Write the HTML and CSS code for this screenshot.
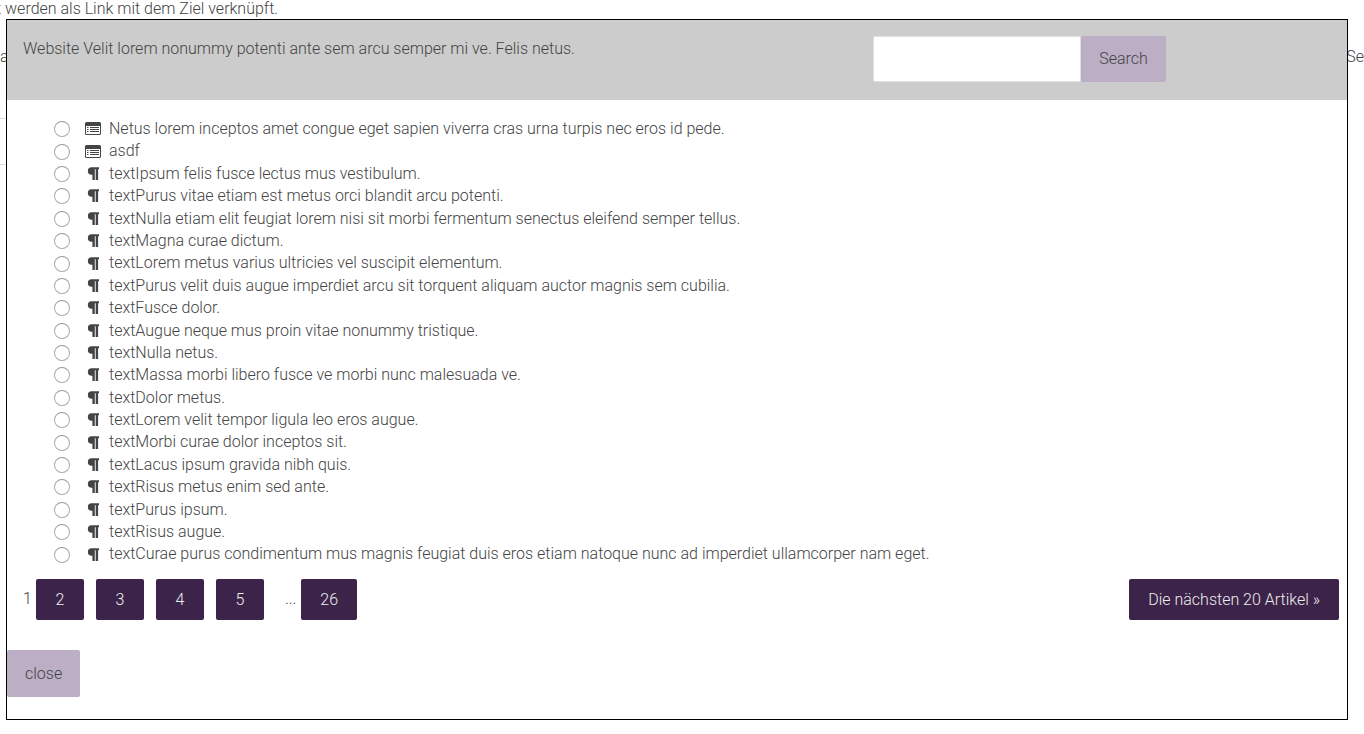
FILE: index.html
```html
<!DOCTYPE html>
<html lang="de">
<head>
<meta charset="utf-8">
<title>Artikel verknüpfen</title>
<link rel="stylesheet" href="styles.css">
</head>
<body>
<div class="page">
  <p class="page-text">t werden als Link mit dem Ziel verknüpft.</p>
  <div class="page-row"><span>a</span><span>Se</span></div>
  <div class="page-field"></div>
</div>

<svg class="sprite" aria-hidden="true">
  <symbol id="article" viewBox="0 0 16 14">
    <path fill-rule="evenodd" d="M1.500 0h13A1.500 1.500 0 0 1 16 1.500v10A1.500 1.500 0 0 1 14.500 13h-13A1.500 1.500 0 0 1 0 11.500v-10A1.500 1.500 0 0 1 1.500 0zM1 4v7.300q0 .7.7.7h12.600q.7 0 .7-.7V4z"/>
    <path d="M2 5h1.500v1H2zM2 7h1.500v1H2zM2 9h1.500v1H2zM5 5h9v1H5zM5 7h9v1H5zM5 9h9v1H5z"/>
  </symbol>
  <symbol id="text" viewBox="0 0 16 14">
    <path d="M6.600.3H14v1.900h-.9v10.700h-2.400V2.200h-.9v10.700H7.400V7.800H6.600A3.750 3.750 0 0 1 6.600.3z"/>
  </symbol>
</svg>

<main class="dialog" role="dialog" aria-label="Artikel auswählen">
  <header class="dialog-head">
    <p class="intro">Website Velit lorem nonummy potenti ante sem arcu semper mi ve. Felis netus.</p>
    <form class="search">
      <input class="search-input" type="text" aria-label="Search">
      <button class="button button-light" type="button">Search</button>
    </form>
  </header>

  <ul class="articles">
    <li><label class="article"><input type="radio" name="article"><svg class="icon"><use href="#article"/></svg><span>Netus lorem inceptos amet congue eget sapien viverra cras urna turpis nec eros id pede.</span></label></li>
    <li><label class="article"><input type="radio" name="article"><svg class="icon"><use href="#article"/></svg><span>asdf</span></label></li>
    <li><label class="article"><input type="radio" name="article"><svg class="icon"><use href="#text"/></svg><span>textIpsum felis fusce lectus mus vestibulum.</span></label></li>
    <li><label class="article"><input type="radio" name="article"><svg class="icon"><use href="#text"/></svg><span>textPurus vitae etiam est metus orci blandit arcu potenti.</span></label></li>
    <li><label class="article"><input type="radio" name="article"><svg class="icon"><use href="#text"/></svg><span>textNulla etiam elit feugiat lorem nisi sit morbi fermentum senectus eleifend semper tellus.</span></label></li>
    <li><label class="article"><input type="radio" name="article"><svg class="icon"><use href="#text"/></svg><span>textMagna curae dictum.</span></label></li>
    <li><label class="article"><input type="radio" name="article"><svg class="icon"><use href="#text"/></svg><span>textLorem metus varius ultricies vel suscipit elementum.</span></label></li>
    <li><label class="article"><input type="radio" name="article"><svg class="icon"><use href="#text"/></svg><span>textPurus velit duis augue imperdiet arcu sit torquent aliquam auctor magnis sem cubilia.</span></label></li>
    <li><label class="article"><input type="radio" name="article"><svg class="icon"><use href="#text"/></svg><span>textFusce dolor.</span></label></li>
    <li><label class="article"><input type="radio" name="article"><svg class="icon"><use href="#text"/></svg><span>textAugue neque mus proin vitae nonummy tristique.</span></label></li>
    <li><label class="article"><input type="radio" name="article"><svg class="icon"><use href="#text"/></svg><span>textNulla netus.</span></label></li>
    <li><label class="article"><input type="radio" name="article"><svg class="icon"><use href="#text"/></svg><span>textMassa morbi libero fusce ve morbi nunc malesuada ve.</span></label></li>
    <li><label class="article"><input type="radio" name="article"><svg class="icon"><use href="#text"/></svg><span>textDolor metus.</span></label></li>
    <li><label class="article"><input type="radio" name="article"><svg class="icon"><use href="#text"/></svg><span>textLorem velit tempor ligula leo eros augue.</span></label></li>
    <li><label class="article"><input type="radio" name="article"><svg class="icon"><use href="#text"/></svg><span>textMorbi curae dolor inceptos sit.</span></label></li>
    <li><label class="article"><input type="radio" name="article"><svg class="icon"><use href="#text"/></svg><span>textLacus ipsum gravida nibh quis.</span></label></li>
    <li><label class="article"><input type="radio" name="article"><svg class="icon"><use href="#text"/></svg><span>textRisus metus enim sed ante.</span></label></li>
    <li><label class="article"><input type="radio" name="article"><svg class="icon"><use href="#text"/></svg><span>textPurus ipsum.</span></label></li>
    <li><label class="article"><input type="radio" name="article"><svg class="icon"><use href="#text"/></svg><span>textRisus augue.</span></label></li>
    <li><label class="article"><input type="radio" name="article"><svg class="icon"><use href="#text"/></svg><span>textCurae purus condimentum mus magnis feugiat duis eros etiam natoque nunc ad imperdiet ullamcorper nam eget.</span></label></li>
  </ul>

  <nav class="pager" aria-label="Seiten">
    <span class="current">1</span>
    <div class="pages">
      <a class="page-link" href="#2">2</a>
      <a class="page-link" href="#3">3</a>
      <a class="page-link" href="#4">4</a>
      <a class="page-link" href="#5">5</a>
    </div>
    <span class="dots">...</span>
    <a class="page-link" href="#26">26</a>
    <a class="page-link next" href="#next">Die nächsten 20 Artikel »</a>
  </nav>

  <button class="button button-light close" type="button">close</button>
</main>
</body>
</html>
```

FILE: styles.css
```css
* {
  box-sizing: border-box;
}

body,
button,
input {
  font-family: "Helvetica Neue", Roboto, "Liberation Sans", sans-serif;
  font-size: 16px;
  font-weight: 300;
  line-height: 1.4;
  color: #444;
}

body {
  margin: 0;
  background: #fff;
}

p,
ul {
  margin: 0;
  padding: 0;
}

.sprite {
  position: absolute;
  width: 0;
  height: 0;
}

/* Page behind the dialog */
.page {
  overflow: hidden;
}

.page-text {
  margin: -2px 0 0 -4px;
}

.page-row {
  display: flex;
  justify-content: space-between;
  margin-top: 26px;
}

.page-field {
  width: 50%;
  height: 47px;
  margin-top: 49px;
  border: solid #ddd;
  border-width: 1px 0;
}

/* Dialog */
.dialog {
  position: absolute;
  top: 19px;
  right: 16px;
  left: 6px;
  padding-bottom: 22px;
  border: 1px solid #000;
  background: #fff;
}

.dialog-head {
  display: grid;
  grid-template-columns: 65% 1fr;
  align-items: start;
  min-height: 80px;
  padding: 16px;
  background: #ccc;
}

.intro {
  padding-top: 2px;
}

.search {
  display: flex;
}

.search-input {
  width: 208px;
  height: 46px;
  padding: 0 12px;
  border: 1px solid #e0e0e0;
  border-radius: 2px;
  background: #fff;
}

.button {
  height: 46px;
  padding: 1px 18px 0;
  border: 0;
  border-radius: 2px;
}

.button-light {
  background: #bbaec5;
}

.close {
  height: 47px;
}

.articles {
  padding: 18px 16px 13px 47px;
  list-style: none;
}

.article {
  display: flex;
  align-items: center;
}

.article input {
  appearance: none;
  flex: none;
  width: 16px;
  height: 16px;
  margin: 0 15px 0 0;
  border: 1px solid #aaa;
  border-top-color: #999;
  border-radius: 50%;
  background: #fff;
}

.icon {
  flex: none;
  width: 16px;
  height: 14px;
  margin-right: 8px;
  fill: #444;
}

.pager {
  display: flex;
  align-items: center;
  margin-bottom: 30px;
  padding: 0 8px 0 16px;
}

.pages {
  display: flex;
  gap: 12px;
}

.page-link {
  min-width: 48px;
  padding: 10px 19px 9px;
  border-radius: 2px;
  background: #3c2349;
  color: #eee;
  text-align: center;
  text-decoration: none;
}

.current {
  margin-right: 4px;
}

.dots {
  margin: 0 5px 0 21px;
}

.next {
  margin-left: auto;
}
```
